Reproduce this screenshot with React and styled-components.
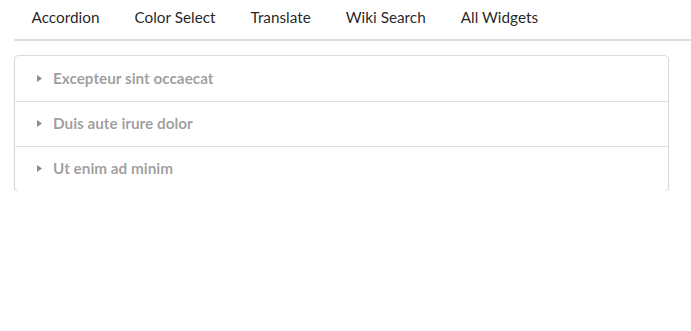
import React from "react";
import styled, { createGlobalStyle } from "styled-components";

const GlobalStyle = createGlobalStyle`
  body {
    margin: 0;
    background: #fff;
    font-family: Lato, "Helvetica Neue", Arial, sans-serif;
  }
`;

const Page = styled.div`
  padding-left: 14px;
`;

const Menu = styled.nav`
  display: flex;
  border-bottom: 2px solid rgba(34, 36, 38, 0.15);
  margin-bottom: 15px;
`;

const MenuItem = styled.a`
  padding: 8px 17.5px 12px;
  line-height: 19px;
  font-size: 15.32px;
  color: rgba(0, 0, 0, 0.87);
  cursor: pointer;
`;

const Accordion = styled.div`
  width: 653px;
  margin-left: 1px;
  border-radius: 4px;
  background: #fff;
  box-shadow: 0 1px 2px 0 rgba(34, 36, 38, 0.15),
    0 0 0 1px rgba(34, 36, 38, 0.15);
`;

const Title = styled.div`
  display: flex;
  align-items: center;
  padding: 11px 22px 13px;
  line-height: 20px;
  font-size: 15.3px;
  font-weight: 700;
  color: rgba(0, 0, 0, 0.4);
  cursor: pointer;
  &:first-child {
    padding-top: 12px;
  }
  & + & {
    border-top: 1px solid rgba(34, 36, 38, 0.15);
  }
`;

const Caret = styled.svg`
  width: 5px;
  height: 7px;
  margin-right: 11px;
  fill: rgba(0, 0, 0, 0.45);
`;

const items = [
  "Excepteur sint occaecat",
  "Duis aute irure dolor",
  "Ut enim ad minim",
];

const App = () => {
  return (
    <Page>
      <GlobalStyle />
      <Menu>
        <MenuItem>Accordion</MenuItem>
        <MenuItem>Color Select</MenuItem>
        <MenuItem>Translate</MenuItem>
        <MenuItem>Wiki Search</MenuItem>
        <MenuItem>All Widgets</MenuItem>
      </Menu>
      <Accordion>
        {items.map((t) => (
          <Title key={t}>
            <Caret viewBox="0 0 5 7">
              <polygon points="0,0 5,3.5 0,7" />
            </Caret>
            {t}
          </Title>
        ))}
      </Accordion>
    </Page>
  );
};

export default App;
